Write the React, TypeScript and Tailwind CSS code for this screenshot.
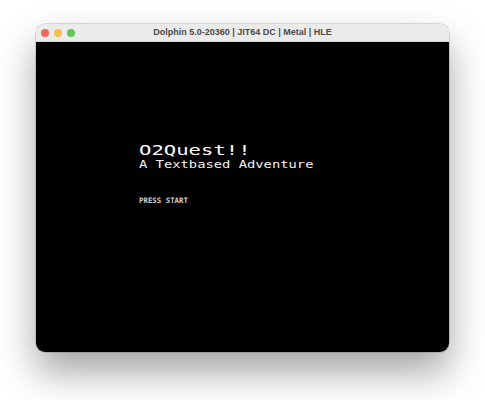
export default function App() {
  return (
    <div className="w-[485px] h-[400px] bg-white pt-[24px] pl-[36px]">
      <div className="w-[413px] h-[328px] rounded-[9px] overflow-hidden flex flex-col shadow-[0_20px_38px_rgba(0,0,0,0.36),0_0_0_0.5px_rgba(0,0,0,0.25)]">
        <div className="relative h-[18px] bg-[#ebebeb] border-b border-[#d6d6d6] flex items-center justify-center">
          <div className="absolute left-[5px] top-[5px] flex gap-[5px]">
            <span className="w-[8px] h-[8px] rounded-full bg-[#ec6a5e]" />
            <span className="w-[8px] h-[8px] rounded-full bg-[#f4bf4f]" />
            <span className="w-[8px] h-[8px] rounded-full bg-[#61c554]" />
          </div>
          <span className="text-[9px] font-bold text-[#4a4a4a] leading-none" style={{ fontFamily: '"Liberation Sans", Arial, sans-serif' }}>
            Dolphin 5.0-20360 | JIT64 DC | Metal | HLE
          </span>
        </div>
        <div className="flex-1 bg-black pt-[100px] pl-[103px]" style={{ fontFamily: '"DejaVu Sans Mono", monospace' }}>
          <div className="text-[14.5px] leading-[16px] text-white origin-left scale-x-[1.42]">O2Quest!!</div>
          <div className="mt-[1px] text-[10px] leading-[12px] text-[#f2f2f2] origin-left scale-x-[1.38]">A Textbased Adventure</div>
          <div className="mt-[25px] text-[7.4px] leading-[9px] font-bold text-[#cfcfcf]">PRESS START</div>
        </div>
      </div>
    </div>
  );
}
